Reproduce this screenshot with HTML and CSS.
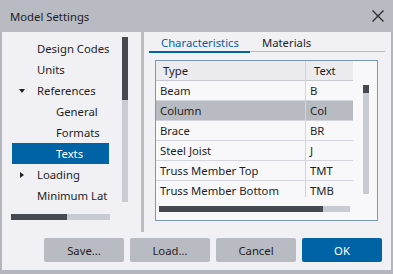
FILE: index.html
```html
<!DOCTYPE html>
<html lang="en">
<head>
    <meta charset="UTF-8">
    <title>Model Settings</title>
    <link rel="stylesheet" href="styles.css">
</head>
<body>

<div class="dialog">
    <div class="dialog__title">
        <span>Model Settings</span>
        <svg class="dialog__close" width="12" height="12" viewBox="0 0 12 12">
            <path d="M0.5 0.5 L11.5 11.5 M11.5 0.5 L0.5 11.5" stroke="#2b2b2b" stroke-width="1.3" fill="none"/>
        </svg>
    </div>

    <div class="dialog__body">
        <div class="nav">
            <div class="nav__view">
                <ul class="tree">
                    <li class="tree__item">Design Codes</li>
                    <li class="tree__item">Units</li>
                    <li class="tree__item"><span class="tree__arrow tree__arrow--open"></span>References</li>
                    <li class="tree__item tree__item--child">General</li>
                    <li class="tree__item tree__item--child">Formats</li>
                    <li class="tree__item tree__item--child tree__item--selected">Texts</li>
                    <li class="tree__item"><span class="tree__arrow"></span>Loading</li>
                    <li class="tree__item">Minimum Lat</li>
                </ul>
                <div class="vscroll vscroll--nav"><div class="vscroll__thumb vscroll__thumb--nav"></div></div>
            </div>
            <div class="hscroll hscroll--nav"><div class="hscroll__thumb hscroll__thumb--nav"></div></div>
        </div>

        <div class="splitter"></div>

        <div class="content">
            <div class="tabs">
                <div class="tabs__tab tabs__tab--active">Characteristics</div>
                <div class="tabs__tab">Materials</div>
            </div>

            <div class="table">
                <div class="table__view">
                    <div class="table__grid">
                        <div class="table__row table__row--head">
                            <div class="table__cell">Type</div>
                            <div class="table__cell">Text</div>
                        </div>
                        <div class="table__row">
                            <div class="table__cell">Beam</div>
                            <div class="table__cell">B</div>
                        </div>
                        <div class="table__row table__row--selected">
                            <div class="table__cell">Column</div>
                            <div class="table__cell">Col</div>
                        </div>
                        <div class="table__row">
                            <div class="table__cell">Brace</div>
                            <div class="table__cell">BR</div>
                        </div>
                        <div class="table__row">
                            <div class="table__cell">Steel Joist</div>
                            <div class="table__cell">J</div>
                        </div>
                        <div class="table__row">
                            <div class="table__cell">Truss Member Top</div>
                            <div class="table__cell">TMT</div>
                        </div>
                        <div class="table__row">
                            <div class="table__cell">Truss Member Bottom</div>
                            <div class="table__cell">TMB</div>
                        </div>
                    </div>
                    <div class="vscroll vscroll--table"><div class="vscroll__thumb vscroll__thumb--table"></div></div>
                </div>
                <div class="hscroll hscroll--table"><div class="hscroll__thumb hscroll__thumb--table"></div></div>
            </div>
        </div>
    </div>

    <div class="dialog__footer">
        <button class="button">Save...</button>
        <button class="button">Load...</button>
        <button class="button">Cancel</button>
        <button class="button button--primary">OK</button>
    </div>
</div>

</body>
</html>
```

FILE: styles.css
```css
* {
    box-sizing: border-box;
}
body {
    margin: 0;
    font-family: "Noto Sans", "Open Sans", sans-serif;
    font-size: 11.3px;
    color: #1f1f24;
}
.dialog {
    width: 393px;
    height: 274px;
    background: hsl(240, 18%, 95%);
    border: solid #b3b6bd;
    border-width: 0 2px 4px 2px;
    display: flex;
    flex-direction: column;
}
.dialog__title {
    height: 32px;
    flex: none;
    background: #b8bbc2;
    margin: 0 -2px;
    padding: 0 9px 0 10px;
    display: flex;
    align-items: center;
    justify-content: space-between;
    color: #202026;
}
.dialog__close {
    margin-right: 0;
}
.dialog__body {
    height: 200px;
    flex: none;
    display: flex;
}

/* left tree */
.nav {
    width: 139px;
    flex: none;
    padding: 5px 0 0 9px;
}
.nav__view {
    display: flex;
}
.tree {
    list-style: none;
    margin: 0;
    padding: 1px 0 0 1px;
    width: 111px;
    height: 169px;
    overflow: hidden;
}
.tree__item {
    position: relative;
    width: 97px;
    height: 21px;
    line-height: 21px;
    padding-left: 25px;
    white-space: nowrap;
}
.tree__item--child {
    padding-left: 44px;
}
.tree__item--selected {
    background: #0063a6;
    color: #fff;
}
.tree__arrow {
    position: absolute;
    left: 8px;
    top: 8px;
    width: 0;
    height: 0;
    border-top: 3px solid transparent;
    border-bottom: 3px solid transparent;
    border-left: 4px solid #222;
}
.tree__arrow--open {
    left: 7px;
    top: 9px;
    border-left: 3px solid transparent;
    border-right: 3px solid transparent;
    border-top: 4px solid #222;
    border-bottom: 0;
}

.vscroll {
    width: 6px;
    background: #c9cbd2;
    flex: none;
}
.vscroll__thumb {
    background: #464950;
}
.vscroll--nav {
    height: 165px;
}
.vscroll__thumb--nav {
    height: 63px;
}
.hscroll {
    height: 6px;
    background: #c9cbd2;
}
.hscroll__thumb {
    height: 100%;
    background: #464950;
}
.hscroll--nav {
    width: 99px;
    margin-top: 8px;
}
.hscroll__thumb--nav {
    width: 56px;
}

.splitter {
    width: 3px;
    flex: none;
    background: #b9bcc3;
}

/* right side */
.content {
    flex: 1;
    padding: 4px 6px 0 5px;
}
.tabs {
    display: flex;
    border-bottom: 1px solid #b9bbc2;
    height: 16px;
}
.tabs__tab {
    height: 16px;
    line-height: 14px;
    padding: 0 14px 0 12px;
    color: #1f1f24;
}
.tabs__tab--active {
    color: #0063a6;
    border-bottom: 2px solid #0063a6;
    height: 17px;
    padding-right: 11px;
}
.table {
    margin: 8px 0 0 6px;
    width: 223px;
    height: 161px;
    border: 1px solid #7d97b8;
    background: #f8f8fb;
}
.table__view {
    display: flex;
}
.table__grid {
    width: 197px;
    height: 136px;
    overflow: hidden;
}
.table__row {
    display: grid;
    grid-template-columns: 149px 1fr;
    height: 20px;
    border-bottom: 1px solid #d3d5db;
}
.table__row--head {
    background: #ebebf0;
    border-bottom-color: #c6c8ce;
}
.table__row--selected {
    background: #b9bbc2;
}
.table__cell {
    line-height: 19px;
    padding-left: 4px;
    white-space: nowrap;
    overflow: hidden;
}
.table__cell + .table__cell {
    border-left: 1px solid #d3d5db;
}
.table__row--head .table__cell {
    padding-left: 7px;
}
.table__row--head .table__cell + .table__cell {
    padding-left: 8px;
}
.vscroll--table {
    margin: 24px 0 0 10px;
    height: 109px;
}
.vscroll__thumb--table {
    height: 8px;
}
.hscroll--table {
    width: 191px;
    margin: 9px 0 0 3px;
}
.hscroll__thumb--table {
    width: 164px;
}

/* buttons */
.dialog__footer {
    flex: none;
    display: flex;
    justify-content: flex-end;
    gap: 6px;
    padding: 6px 9px 0 0;
}
.button {
    width: 80px;
    height: 24px;
    border: none;
    border-radius: 2px;
    background: #b9bbc2;
    font-family: inherit;
    font-size: 11.3px;
    color: #1f1f24;
    padding: 0;
}
.button--primary {
    background: #0063a6;
    color: #fff;
}
```
